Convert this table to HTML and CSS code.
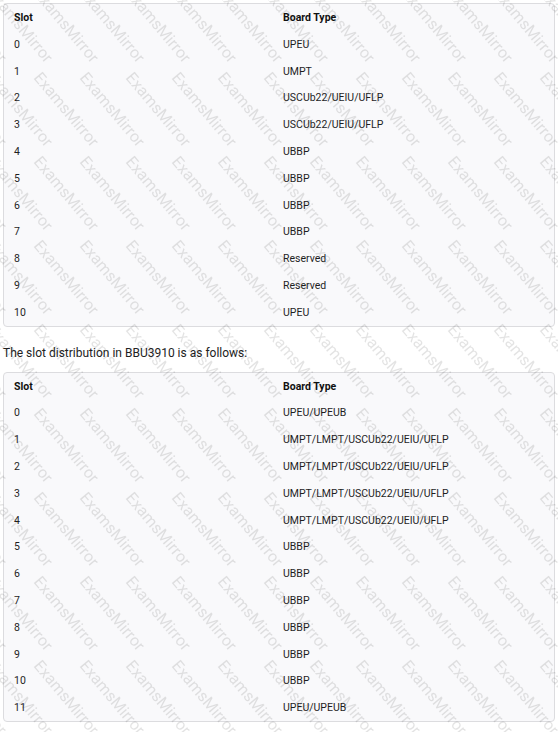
FILE: index.html
```html
<!DOCTYPE html>
<html>
<head>
<meta charset="utf-8">
<link rel="stylesheet" href="styles.css">
</head>
<body>
<div class="page">
  <div class="table-wrap">
    <table class="slots">
      <thead><tr><th class="c1">Slot</th><th>Board Type</th></tr></thead>
      <tbody>
        <tr><td>0</td><td>UPEU</td></tr>
        <tr><td>1</td><td>UMPT</td></tr>
        <tr><td>2</td><td>USCUb22/UEIU/UFLP</td></tr>
        <tr><td>3</td><td>USCUb22/UEIU/UFLP</td></tr>
        <tr><td>4</td><td>UBBP</td></tr>
        <tr><td>5</td><td>UBBP</td></tr>
        <tr><td>6</td><td>UBBP</td></tr>
        <tr><td>7</td><td>UBBP</td></tr>
        <tr><td>8</td><td>Reserved</td></tr>
        <tr><td>9</td><td>Reserved</td></tr>
        <tr><td>10</td><td>UPEU</td></tr>
      </tbody>
    </table>
  </div>
  <p class="intro">The slot distribution in BBU3910 is as follows:</p>
  <div class="table-wrap">
    <table class="slots">
      <thead><tr><th class="c1">Slot</th><th>Board Type</th></tr></thead>
      <tbody>
        <tr><td>0</td><td>UPEU/UPEUB</td></tr>
        <tr><td>1</td><td>UMPT/LMPT/USCUb22/UEIU/UFLP</td></tr>
        <tr><td>2</td><td>UMPT/LMPT/USCUb22/UEIU/UFLP</td></tr>
        <tr><td>3</td><td>UMPT/LMPT/USCUb22/UEIU/UFLP</td></tr>
        <tr><td>4</td><td>UMPT/LMPT/USCUb22/UEIU/UFLP</td></tr>
        <tr><td>5</td><td>UBBP</td></tr>
        <tr><td>6</td><td>UBBP</td></tr>
        <tr><td>7</td><td>UBBP</td></tr>
        <tr><td>8</td><td>UBBP</td></tr>
        <tr><td>9</td><td>UBBP</td></tr>
        <tr><td>10</td><td>UBBP</td></tr>
        <tr><td>11</td><td>UPEU/UPEUB</td></tr>
      </tbody>
    </table>
  </div>
</div>
<svg class="watermark" aria-hidden="true">
  <defs>
    <pattern id="wm" patternUnits="userSpaceOnUse" width="46" height="84" x="33" y="78">
      <g class="wm-text">
        <text transform="translate(-92,-84) rotate(50)">ExamsMirror</text>
        <text transform="translate(-46,-84) rotate(50)">ExamsMirror</text>
        <text transform="translate(0,-84) rotate(50)">ExamsMirror</text>
        <text transform="translate(46,-84) rotate(50)">ExamsMirror</text>
        <text transform="translate(-92,0) rotate(50)">ExamsMirror</text>
        <text transform="translate(-46,0) rotate(50)">ExamsMirror</text>
        <text transform="translate(0,0) rotate(50)">ExamsMirror</text>
        <text transform="translate(46,0) rotate(50)">ExamsMirror</text>
        <text transform="translate(-92,84) rotate(50)">ExamsMirror</text>
        <text transform="translate(-46,84) rotate(50)">ExamsMirror</text>
        <text transform="translate(0,84) rotate(50)">ExamsMirror</text>
      </g>
    </pattern>
  </defs>
  <rect width="100%" height="100%" fill="url(#wm)"/>
</svg>
</body>
</html>
```
FILE: styles.css
```css
html, body {
  margin: 0;
  padding: 0;
  background: #ffffff;
}
body {
  font-family: Roboto, "Liberation Sans", Arial, sans-serif;
  color: #1f1f1f;
  position: relative;
  min-height: 732px;
  overflow: hidden;
}
.page {
  padding: 3px 3px 0 3px;
}
.table-wrap {
  border: 1px solid #dcdcdf;
  border-radius: 4px;
  background: #f9f9fb;
  overflow: hidden;
}
.slots {
  width: 100%;
  border-collapse: collapse;
  font-size: 10.5px;
}
.slots th, .slots td {
  text-align: left;
  padding: 9px 10px 7px 10px;
  line-height: 10.8px;
  height: 10.8px;
}
.slots th {
  font-weight: 700;
  color: #111;
}
.slots .c1 {
  width: 249px;
}
.intro {
  font-size: 12px;
  line-height: 18px;
  margin: 17px 0 10px 0;
  color: #222;
}
.watermark {
  position: absolute;
  left: 0;
  top: 0;
  width: 558px;
  height: 732px;
  pointer-events: none;
}
.wm-text {
  font-family: Roboto, "Liberation Sans", Arial, sans-serif;
  font-size: 16px;
  fill: #000;
  fill-opacity: 0.11;
}
```
